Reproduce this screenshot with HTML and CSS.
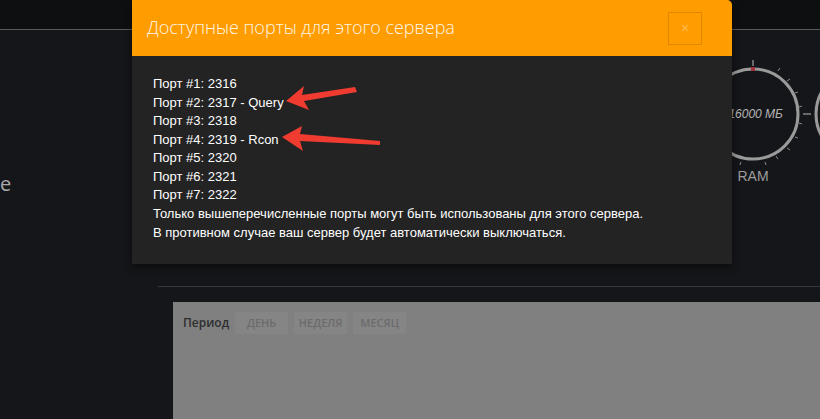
FILE: index.html
```html
<!DOCTYPE html>
<html lang="ru">

<head>
    <meta charset="UTF-8">
    <title>Порты сервера</title>
    <link rel="stylesheet" href="styles.css">
</head>

<body>
    <div class="topbar"></div>

    <div class="overview">
        <div class="server-name"><span>e</span></div>
        <div class="gauges">
            <div class="gauge">
                <svg width="108" height="110" viewBox="0 0 108 110">
                    <g stroke="#8a8a8a" stroke-width="1">
                        <line x1="54" y1="1" x2="54" y2="7" stroke="#bbb" />
                        <line x1="27" y1="9" x2="29" y2="12" />
                        <line x1="81" y1="9" x2="79" y2="12" />
                        <line x1="91" y1="20" x2="88" y2="22" />
                        <line x1="99" y1="33" x2="96" y2="34" />
                        <line x1="103" y1="47" x2="100" y2="48" />
                        <line x1="103" y1="65" x2="100" y2="64" />
                        <line x1="99" y1="79" x2="96" y2="78" />
                        <line x1="91" y1="91" x2="88" y2="89" />
                        <line x1="79" y1="100" x2="77" y2="97" />
                        <line x1="67" y1="106" x2="66" y2="103" />
                        <line x1="41" y1="106" x2="42" y2="103" />
                        <line x1="29" y1="100" x2="31" y2="97" />
                        <line x1="104" y1="55" x2="108" y2="55" stroke="#bbb" />
                    </g>
                    <circle cx="54" cy="55" r="45" fill="none" stroke="#9a9a9a" stroke-width="3" />
                    <rect x="52" y="8" width="4" height="4" fill="#a0303a" />
                    <text x="55" y="59" class="gauge-value">/16000 МБ</text>
                </svg>
                <div class="gauge-label">RAM</div>
            </div>
            <div class="gauge">
                <svg width="108" height="110" viewBox="0 0 108 110">
                    <circle cx="54" cy="55" r="45" fill="none" stroke="#9a9a9a" stroke-width="3" />
                    <line x1="0" y1="55" x2="4" y2="55" stroke="#bbb" />
                </svg>
            </div>
        </div>
    </div>

    <div class="divider"></div>

    <div class="chart">
        <div class="period">
            <span class="period-title">Период</span>
            <span class="period-btn">ДЕНЬ</span>
            <span class="period-btn">НЕДЕЛЯ</span>
            <span class="period-btn">МЕСЯЦ</span>
        </div>
    </div>

    <div class="modal">
        <div class="modal-header">
            <h4 class="modal-title">Доступные порты для этого сервера</h4>
            <span class="close">×</span>
        </div>
        <div class="modal-body">
            <p>Порт #1: 2316</p>
            <p>Порт #2: 2317 - Query</p>
            <p>Порт #3: 2318</p>
            <p>Порт #4: 2319 - Rcon</p>
            <p>Порт #5: 2320</p>
            <p>Порт #6: 2321</p>
            <p>Порт #7: 2322</p>
            <p>Только вышеперечисленные порты могут быть использованы для этого сервера.</p>
            <p>В противном случае ваш сервер будет автоматически выключаться.</p>
        </div>
        <svg class="arrows" width="600" height="263" viewBox="132 0 600 263">
            <polygon points="286,101 304,86 302,95 355,87 357,92 304,101 309,110" />
            <polygon points="282,137 302,126 300,134 380,141 380,145 300,141 303,151" />
        </svg>
    </div>
</body>

</html>
```

FILE: styles.css
```css
* {
    margin: 0;
    padding: 0;
    box-sizing: border-box;
}

body {
    width: 820px;
    height: 419px;
    overflow: hidden;
    position: relative;
    background: #151619;
    font-family: "Liberation Sans", Arial, sans-serif;
    font-size: 13px;
    line-height: 1.42857;
    color: #fff;
}

.topbar {
    height: 30px;
    background: #0e0f11;
    border-bottom: 1px solid #5a5a5c;
}

.overview {
    display: flex;
    height: 256px;
}

.server-name {
    flex-shrink: 0;
    width: 120px;
    padding-top: 140px;
    font-family: "Open Sans", sans-serif;
    font-size: 20px;
    line-height: 27px;
    color: #a9a9ab;
}

.gauges {
    display: flex;
    flex-shrink: 0;
    margin-left: 579px;
    padding-top: 29px;
}

.gauge {
    width: 108px;
    flex-shrink: 0;
    text-align: center;
}

.gauge svg {
    display: block;
}

.gauge-value {
    font-family: "Liberation Sans", Arial, sans-serif;
    font-size: 12px;
    font-style: italic;
    fill: #b5b5b5;
    text-anchor: middle;
}

.gauge-label {
    margin-top: -2px;
    font-size: 14px;
    color: #9d9d9d;
}

.divider {
    margin-left: 158px;
    border-top: 1px solid #38393c;
}

.chart {
    margin: 15px 0 0 173px;
    height: 120px;
    background: #808080;
    padding: 10px 10px;
}

.period {
    display: flex;
    align-items: center;
    gap: 6px;
}

.period-title {
    font-family: "Open Sans", sans-serif;
    font-size: 12px;
    font-weight: 600;
    color: #2e2e2e;
}

.period-btn {
    width: 53px;
    height: 22px;
    line-height: 22px;
    text-align: center;
    background: #858585;
    font-family: "Open Sans", sans-serif;
    font-size: 11px;
    font-weight: 600;
    color: #6c6c6c;
}

.modal {
    position: absolute;
    top: 0;
    left: 132px;
    width: 600px;
    border-radius: 0 5px 0 0;
    overflow: hidden;
    background: #232323;
    box-shadow: 0 3px 9px rgba(0, 0, 0, .5);
}

.modal-header {
    display: flex;
    align-items: center;
    justify-content: space-between;
    height: 56px;
    padding: 0 30px 0 15px;
    background: #ff9c00;
}

.modal-title {
    font-family: "Open Sans", sans-serif;
    font-size: 18px;
    font-weight: 300;
    color: #fff6e6;
}

.close {
    width: 34px;
    height: 33px;
    line-height: 31px;
    text-align: center;
    border: 1px solid #e08700;
    font-size: 14px;
    color: #ffbd55;
}

.modal-body {
    padding: 19px 21px 22px;
}

.arrows {
    position: absolute;
    top: 0;
    left: 0;
}

.arrows polygon {
    fill: #ef3b30;
}
```
